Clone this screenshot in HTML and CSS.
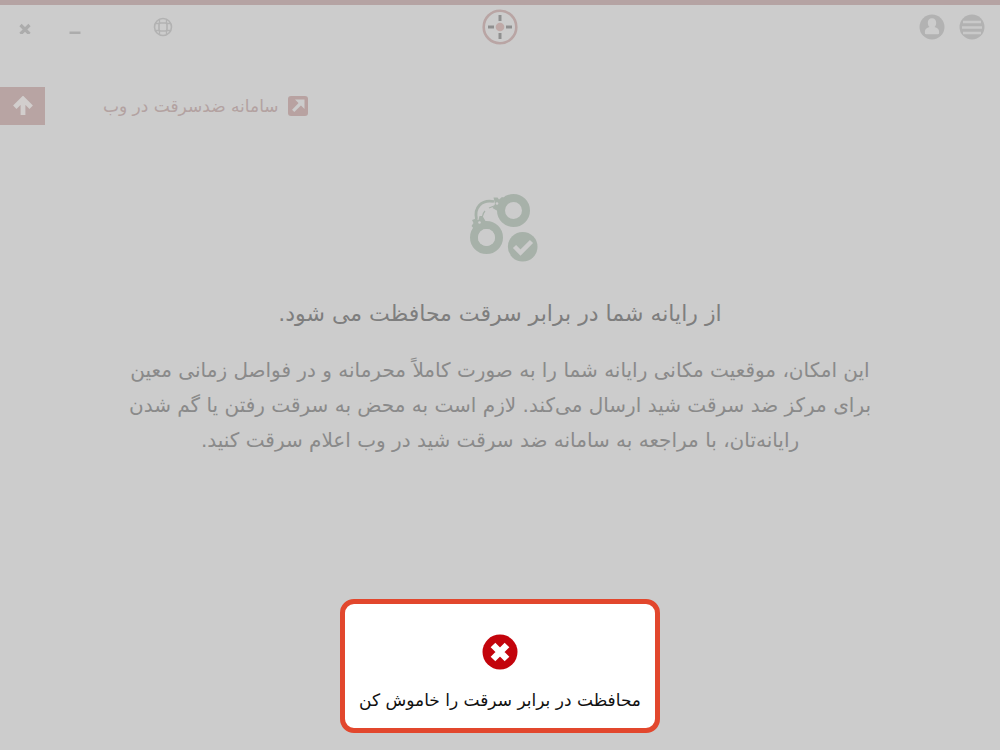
FILE: index.html
```html
<!DOCTYPE html>
<html lang="fa" dir="rtl">
<head>
<meta charset="utf-8">
<meta name="viewport" content="width=device-width, initial-scale=1">
<title>ضد سرقت شید</title>
<link rel="stylesheet" href="styles.css">
</head>
<body>
<div class="app">
  <header class="topbar">
    <div class="topbar-menu">
      <button class="icon-button" type="button" aria-label="منو">
        <svg width="26" height="26" viewBox="0 0 26 26"><circle cx="13" cy="13" r="12.5" fill="#b2b2b2"/><path d="M4 8h18M3 13.500h20M4 19h18" stroke="#c9c9c9" stroke-width="2.400"/></svg>
      </button>
      <button class="icon-button" type="button" aria-label="حساب کاربری">
        <svg width="26" height="26" viewBox="0 0 26 26"><circle cx="13" cy="13" r="12.5" fill="#b2b2b2"/><path d="M13 4.200c2.700 0 4.200 2 4.200 4.500 0 1.800-.7 3.300-1.700 4.200 3 .8 4.600 2 4.600 4.600v1.600q0 1.200-1.200 1.200H7.100q-1.200 0-1.200-1.200v-1.600c0-2.600 1.600-3.800 4.600-4.600-1-.9-1.700-2.400-1.700-4.200 0-2.500 1.500-4.500 4.200-4.500z" fill="#cccccc"/></svg>
      </button>
    </div>
    <svg class="logo" width="36" height="36" viewBox="0 0 36 36" aria-hidden="true"><circle cx="18" cy="18" r="16.300" fill="none" stroke="#b9a5a4" stroke-width="2.600"/><circle cx="18" cy="18" r="4.300" fill="#bfa9a7"/><path d="M18 6v6M18 24v6M6 18h6M24 18h6" stroke="#8f8f8f" stroke-width="3"/></svg>
    <div class="window-controls">
      <button class="icon-button help" type="button" aria-label="راهنما">
        <svg width="20" height="20" viewBox="0 0 20 20" fill="none" stroke="#b2b2b2"><circle cx="10" cy="10" r="8.500" stroke-width="1.600"/><rect x="6" y="6" width="8" height="8" rx="1.500" stroke-width="1.600"/><path d="M6.500 2.500v4.500M13.500 2.500v4.500M6.500 13v4.500M13.500 13v4.500M2.500 6.500h4.500M2.500 13.500h4.500M13 6.500h4.500M13 13.500h4.500" stroke-width="1.300"/></svg>
      </button>
      <button class="icon-button minimize" type="button" aria-label="کوچک کردن">
        <svg width="12" height="14" viewBox="0 0 12 14"><path d="M.5 13h11" stroke="#acacac" stroke-width="3"/></svg>
      </button>
      <button class="icon-button close" type="button" aria-label="بستن">
        <svg width="12" height="14" viewBox="0 0 12 14"><path d="M1.500 5l9 9M10.500 5l-9 9" stroke="#acacac" stroke-width="3.200"/></svg>
      </button>
    </div>
  </header>

  <nav class="toolbar">
    <a class="web-link" href="#web">
      <svg width="20" height="20" viewBox="0 0 20 20" aria-hidden="true"><rect width="20" height="20" rx="3" fill="#b8a2a1"/><path d="M5.200 14.800L13 7" stroke="#cccccc" stroke-width="3.200"/><path d="M7 3.500h9.500V13z" fill="#cccccc"/></svg>
      <span>سامانه ضدسرقت در وب</span>
    </a>
    <button class="up-button" type="button" aria-label="بالا">
      <svg width="20" height="20" viewBox="0 0 20 20"><path d="M10 19V5M1.800 11.200L10 3l8.200 8.200" fill="none" stroke="#d2cecd" stroke-width="4.800"/></svg>
    </button>
  </nav>

  <main class="content">
    <svg class="status-icon" width="68" height="68" viewBox="0 0 68 68" aria-hidden="true">
      <g fill="none" stroke="#a7b1a9"><circle cx="43.500" cy="16.500" r="12.500" stroke-width="8"/><circle cx="16.500" cy="43.500" r="12.500" stroke-width="8"/><path d="M6.500 25C4 14 11 5 24 7.500" stroke-width="2.800"/><path d="M12 24c1-3 1-5 3-7M19 14l5-2" stroke-width="1.200"/></g>
      <path d="M23.500 3.500h4l1.500 2 3-2.500 5 2-5 17-3.500-4.500-6-3.500 2.500-4z" fill="#a7b1a9"/>
      <path d="M2 26l4-1.500 2.500 1.500 1-4h3l3 5 5 3.500-16 5-3-3.500 2-3z" fill="#a7b1a9"/>
      <circle cx="27" cy="9.500" r="1.300" fill="#cccccc"/>
      <circle cx="9.500" cy="28.500" r="1.300" fill="#cccccc"/>
      <circle cx="52.700" cy="52.700" r="14.800" fill="#a7b1a9"/>
      <path d="M44.500 52.500l6 6 11-11" fill="none" stroke="#cccccc" stroke-width="4.500"/>
      <circle cx="16.500" cy="43.500" r="8.500" fill="#cccccc"/>
    </svg>
    <h1 class="title">از رایانه شما در برابر سرقت محافظت می شود.</h1>
    <p class="description">این امکان، موقعیت مکانی رایانه شما را به صورت کاملاً محرمانه و در فواصل زمانی معین<br>برای مرکز ضد سرقت شید ارسال می‌کند. لازم است به محض به سرقت رفتن یا گم شدن<br>رایانه‌تان، با مراجعه به سامانه ضد سرقت شید در وب اعلام سرقت کنید.</p>
  </main>

  <footer class="actions">
    <button class="turn-off" type="button">
      <svg width="36" height="36" viewBox="0 0 36 36" aria-hidden="true"><circle cx="18" cy="18" r="17.500" fill="#c3040c"/><path d="M11 11l14 14M25 11l-14 14" stroke="#ffffff" stroke-width="6.600"/></svg>
      <span>محافظت در برابر سرقت را خاموش کن</span>
    </button>
  </footer>
</div>
</body>
</html>
```
FILE: styles.css
```css
* {
  box-sizing: border-box;
}

body {
  margin: 0;
  background: #cccccc;
  color: #8a8a8a;
  font-family: "DejaVu Sans", sans-serif;
}

button {
  border: 0;
  background: none;
  padding: 0;
  font: inherit;
  color: inherit;
  cursor: pointer;
}

svg {
  display: block;
}

.app {
  display: flex;
  flex-direction: column;
  min-height: 100vh;
  border-top: 5px solid #b5a3a3;
}

.topbar {
  display: grid;
  grid-template-columns: 1fr auto 1fr;
  align-items: center;
  padding: 4px 15px 0;
}

.topbar-menu {
  display: flex;
  gap: 14px;
}

.window-controls {
  display: flex;
  justify-content: flex-end;
  align-items: center;
  padding-left: 4px;
}

.minimize {
  margin-right: 72px;
}

.close {
  margin-right: 38px;
}

.toolbar {
  display: flex;
  justify-content: flex-end;
  align-items: center;
  gap: 58px;
  margin-top: 42px;
}

.web-link {
  display: flex;
  align-items: center;
  gap: 9px;
  color: #b3a2a1;
  font-size: 17px;
  text-decoration: none;
}

.up-button {
  display: flex;
  align-items: center;
  justify-content: center;
  width: 45px;
  height: 38px;
  background: #b8a4a3;
}

.content {
  display: flex;
  flex-direction: column;
  align-items: center;
  padding: 69px 24px 24px;
  text-align: center;
}

.status-icon {
  margin-left: 8px;
}

.title {
  margin: 34px 0 0;
  font-size: 22px;
  line-height: 36px;
  font-weight: 400;
  color: #7e7e7e;
}

.description {
  margin: 21px 0 0;
  font-size: 20px;
  line-height: 35px;
}

.actions {
  display: flex;
  justify-content: center;
  margin-top: auto;
  padding-bottom: 17px;
}

.turn-off {
  display: flex;
  flex-direction: column;
  align-items: center;
  gap: 16px;
  padding: 30px 14px 14px;
  border: 5px solid #e2472d;
  border-radius: 14px;
  background: #ffffff;
  color: #111111;
  font-size: 17px;
  line-height: 28px;
}
```
